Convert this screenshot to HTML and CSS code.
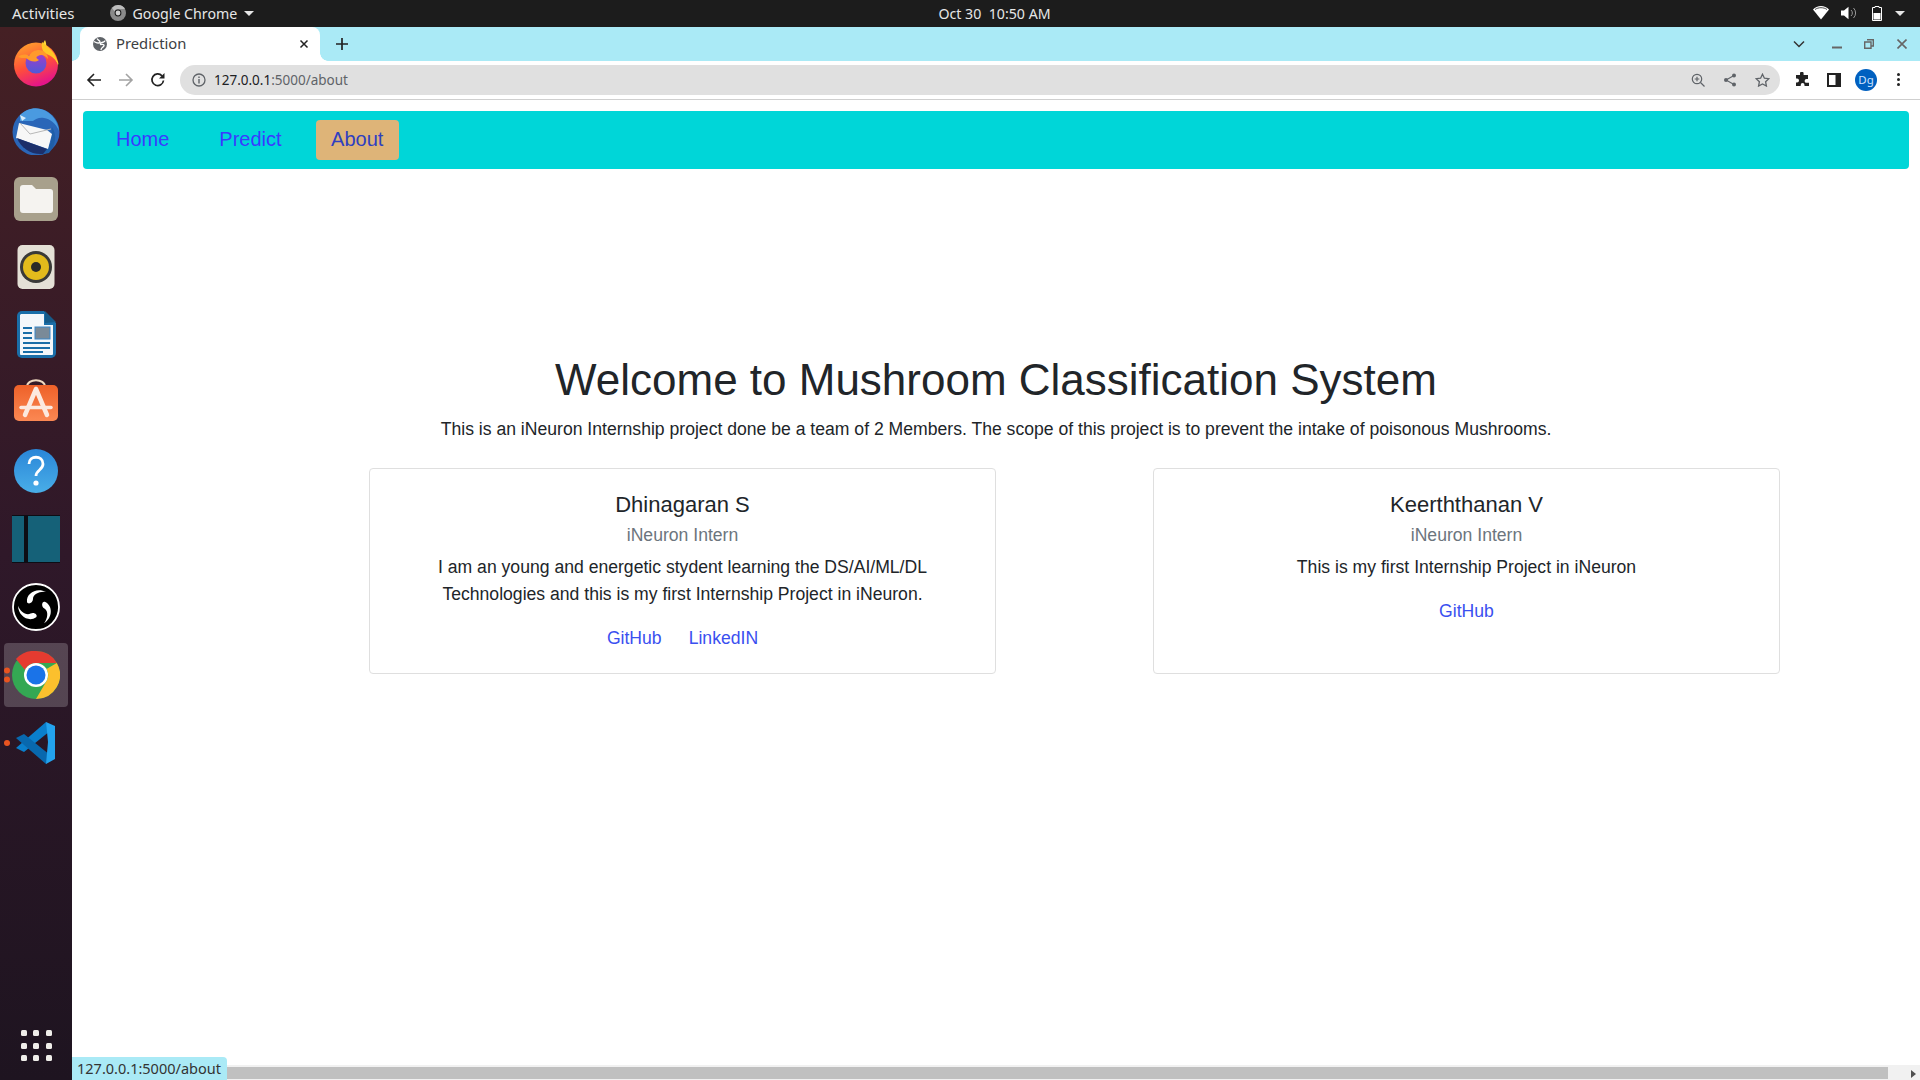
FILE: index.html
```html
<!DOCTYPE html>
<html lang="en">
<head>
<meta charset="utf-8">
<title>Prediction</title>
<link rel="stylesheet" href="styles.css">
</head>
<body>
<header class="topbar">
  <div class="top-left">
    <span class="activities">Activities</span>
    <span class="app-menu">
      <svg class="app-icon" viewBox="0 0 16 16"><circle cx="8" cy="8" r="8" fill="#8a8a8a"/><path d="M8 0a8 8 0 0 1 7 4H8a4 4 0 0 0-3.600 2.200L2 3a8 8 0 0 1 6-3z" fill="#bdbdbd"/><circle cx="8" cy="8" r="3.400" fill="#1c1c1c"/><circle cx="8" cy="8" r="2.400" fill="#d0d0d0"/></svg>
      <span>Google Chrome</span>
      <i class="caret"></i>
    </span>
  </div>
  <div class="clock">Oct 30&nbsp; 10:50 AM</div>
  <div class="tray">
    <svg width="16" height="14" viewBox="0 0 16 14"><path d="M0 3.500C2 1.300 5 0 8 0s6 1.300 8 3.500L8 13.500z" fill="#fff"/><path d="M2 3.500C3.700 2.300 5.800 1.700 8 1.700s4.300.6 6 1.800" fill="none" stroke="#1c1c1c" stroke-width=".8"/></svg>
    <svg width="16" height="14" viewBox="0 0 16 14"><path d="M0 4.500h3L7.500.8v12.400L3 9.500H0z" fill="#fff"/><path d="M10 4a4 4 0 0 1 0 6M12.500 2a7 7 0 0 1 0 10" fill="none" stroke="#999" stroke-width="1"/></svg>
    <svg class="battery" width="10" height="15" viewBox="0 0 10 15"><path d="M3 .5h4v1h2.500v13H.5v-13H3z" fill="none" stroke="#fff"/><rect x="1.500" y="7" width="7" height="6.500" fill="#fff"/></svg>
    <i class="caret caret-tray"></i>
  </div>
</header>

<div class="desktop">
  <nav class="dock">
    <div class="dock-list">
      <div class="dock-item">
        <svg viewBox="0 0 48 48" width="48" height="48"><defs><linearGradient id="ff" x1=".1" y1="0" x2=".5" y2="1"><stop offset="0" stop-color="#ffa92a"/><stop offset=".55" stop-color="#ff4f3a"/><stop offset="1" stop-color="#e4148a"/></linearGradient><linearGradient id="ffg" x1="0" y1="0" x2="0" y2="1"><stop offset="0" stop-color="#a83ac8"/><stop offset="1" stop-color="#4d5ad8"/></linearGradient></defs><circle cx="24" cy="25.500" r="22" fill="url(#ff)"/><path d="M33 1c2 4 1 7 1 10 4 2 8 5 12 12 .5 1 .5 2 0 3-2-6-6-11-13-14-3-3-3-7 0-11z" fill="#ffd83a"/><path d="M30 3c6 5 15 11 16 22-3-6-8-9-14-11-2-4-3-7-2-11z" fill="#ffc726"/><circle cx="24" cy="24" r="10.500" fill="url(#ffg)"/><path d="M6 18c4-3 8-3 11-1 2-4 6-6 10-6 5 0 9 4 9 9-3-4-7-5-10-3-3 1-1 3 1 4-4 3-10 1-13-2-3 0-6 0-8-1z" fill="#ff9a2b"/></svg>
      </div>
      <div class="dock-item">
        <svg viewBox="0 0 48 48" width="48" height="48"><circle cx="24" cy="25" r="23.500" fill="#2a66b8"/><path d="M8 8c7-7 17-9 26-4 7 4 12 11 13 20-3-8-9-12-15-13-5-1-8 1-11 3L8 14z" fill="#4a9ae0"/><path d="M40 20c5 8 4 18-3 26l-10 2 6-6 4-2-2-2 4-2z" fill="#1f5ea8"/><path d="M7 16l28 7 5 4-4 15L4 31z" fill="#f7f7f7"/><path d="M8 16l10 11 21-5" fill="none" stroke="#b8b8b8" stroke-width="1"/><path d="M5 31l30 11-4 5C19 48 9 41 5 31z" fill="#1c2f6a"/><path d="M8 8l2 6 4-3z" fill="#d7ecfa"/></svg>
      </div>
      <div class="dock-item">
        <svg viewBox="0 0 48 48" width="48" height="48"><rect x="2" y="2" width="44" height="44" rx="6" fill="#a8a08c"/><path d="M8 13a3 3 0 0 1 3-3h9l4 4h14a3 3 0 0 1 3 3v18a3 3 0 0 1-3 3H11a3 3 0 0 1-3-3z" fill="#f5f3f0"/></svg>
      </div>
      <div class="dock-item">
        <svg viewBox="0 0 48 48" width="48" height="48"><rect x="5.500" y="2" width="37" height="44" rx="5" fill="#e4e0d6"/><circle cx="24" cy="24" r="16" fill="#3a3a38"/><circle cx="24" cy="24" r="13" fill="#e3bb1c"/><circle cx="24" cy="24" r="5" fill="#2a2a28"/></svg>
      </div>
      <div class="dock-item">
        <svg viewBox="0 0 48 48" width="48" height="48"><path d="M10 0h22l12 12v30a5 5 0 0 1-5 5H10a5 5 0 0 1-5-5V5a5 5 0 0 1 5-5z" fill="#1a6ea8"/><path d="M9 3h23v11h9v29a1 1 0 0 1-1 1H9a1 1 0 0 1-1-1V4z" fill="#f4f7fa"/><path d="M33 0l11 11-11 1z" fill="#165a88"/><rect x="23" y="16" width="15" height="12" fill="#7a8a98" stroke="#3a88c8"/><path d="M11 17h9M11 22h9M11 27h9M11 32h27M11 37h27M11 41h20" stroke="#1a6ea8" stroke-width="2.200"/></svg>
      </div>
      <div class="dock-item">
        <svg viewBox="0 0 48 48" width="48" height="48"><defs><linearGradient id="sw" x1="0" y1="0" x2="0" y2="1"><stop offset="0" stop-color="#ee6129"/><stop offset="1" stop-color="#fb8853"/></linearGradient></defs><path d="M15 8c0-9 18-9 18 0" fill="none" stroke="#efd9c0" stroke-width="2"/><rect x="2" y="6" width="44" height="36" rx="5" fill="url(#sw)"/><path d="M24 10L13 36M24 10l11 26" stroke="#fce9df" stroke-width="4.500" stroke-linecap="round"/><path d="M9 28.500h30" stroke="#fce9df" stroke-width="3.500" stroke-linecap="round"/></svg>
      </div>
      <div class="dock-item">
        <svg viewBox="0 0 48 48" width="48" height="48"><defs><linearGradient id="hp" x1="0" y1="0" x2="0" y2="1"><stop offset="0" stop-color="#2a86d8"/><stop offset="1" stop-color="#49aee8"/></linearGradient></defs><circle cx="24" cy="24" r="22" fill="url(#hp)"/><path d="M17 17c0-9 14-9 14 0 0 6-7 6-7 12" fill="none" stroke="#fff" stroke-width="2.800"/><circle cx="24" cy="36" r="2.600" fill="#fff"/></svg>
      </div>
      <div class="dock-item">
        <svg viewBox="0 0 48 48" width="48" height="48"><rect width="48" height="48" fill="#0d0d14"/><rect x="0" y="1" width="12" height="46" fill="#156178"/><rect x="16" y="1" width="32" height="46" fill="#156178"/></svg>
      </div>
      <div class="dock-item">
        <svg viewBox="0 0 48 48" width="48" height="48"><circle cx="24" cy="24" r="23" fill="#000" stroke="#fff" stroke-width="1.800"/><g fill="#fff"><path d="M15 19C14 10 25 4 34 9 28 8 21 11 21 16 21 20 16 22 15 19z"/><path d="M15 19C14 10 25 4 34 9 28 8 21 11 21 16 21 20 16 22 15 19z" transform="rotate(120 24 24)"/><path d="M15 19C14 10 25 4 34 9 28 8 21 11 21 16 21 20 16 22 15 19z" transform="rotate(240 24 24)"/></g></svg>
      </div>
      <div class="dock-item dock-active">
        <span class="pips"><i></i><i></i></span>
        <svg viewBox="0 0 48 48" width="48" height="48"><circle cx="24" cy="24" r="24" fill="#34a853"/><path d="M24 0a24 24 0 0 1 20.800 12H24a12 12 0 0 0-11 7L4 8A24 24 0 0 1 24 0z" fill="#e53b30"/><path d="M44.800 12A24 24 0 0 1 24 48l10.500-18A12 12 0 0 0 34.500 18z" fill="#fbc02d"/><circle cx="24" cy="24" r="12" fill="#fff"/><circle cx="24" cy="24" r="9.500" fill="#1a73e8"/></svg>
      </div>
      <div class="dock-item">
        <span class="pips"><i></i></span>
        <svg viewBox="0 0 48 48" width="48" height="48"><path d="M34 3L38 12 12 33 4 29z" fill="#0a7fcc"/><path d="M4 19l8-4 26 21-4 9z" fill="#0868ae"/><path d="M34 3l9 4v33l-9 5 2-22z" fill="#23a3ee"/></svg>
      </div>
    </div>
    <div class="grid-btn"><i></i><i></i><i></i><i></i><i></i><i></i><i></i><i></i><i></i></div>
  </nav>

  <main class="window">
    <div class="tabstrip">
      <div class="tab">
        <svg class="favicon" width="14" height="14" viewBox="0 0 14 14"><circle cx="7" cy="7" r="7" fill="#5f6368"/><path d="M4 1.500c1 2 3 2 3 3.500S4 6 3 5.500L1 4.500M8 13c0-2 1-2 2.500-3.500S10 7 8.500 7.500 7 6 9 5.500s3-1 3-2" fill="none" stroke="#fff" stroke-width="1.300"/></svg>
        <span class="tab-title">Prediction</span>
        <svg class="tab-close" width="10" height="10" viewBox="0 0 10 10"><path d="M1.500 1.500l7 7M8.500 1.500l-7 7" stroke="#222" stroke-width="1.500"/></svg>
      </div>
      <svg class="new-tab" width="12" height="12" viewBox="0 0 12 12"><path d="M6 0v12M0 6h12" stroke="#222" stroke-width="1.700"/></svg>
      <div class="win-controls">
        <svg class="chev" width="12" height="8" viewBox="0 0 12 8"><path d="M1 1.500l5 5 5-5" fill="none" stroke="#333" stroke-width="1.500"/></svg>
        <svg class="win-min" width="10" height="10" viewBox="0 0 10 10"><path d="M0 8.500h10" stroke="#666" stroke-width="2"/></svg>
        <svg class="win-max" width="10" height="10" viewBox="0 0 10 10"><path d="M3 .7h6.300V7H7M.7 3H7v6.300H.7z" fill="none" stroke="#666" stroke-width="1.400"/></svg>
        <svg class="win-close" width="10" height="10" viewBox="0 0 10 10"><path d="M.5.500l9 9M9.500.500l-9 9" stroke="#666" stroke-width="1.600"/></svg>
      </div>
    </div>

    <div class="toolbar">
      <svg width="16" height="16" viewBox="0 0 16 16"><path d="M15 8H2M8 2L2 8l6 6" fill="none" stroke="#222" stroke-width="1.600"/></svg>
      <svg width="16" height="16" viewBox="0 0 16 16"><path d="M1 8h13M8 2l6 6-6 6" fill="none" stroke="#a3a3a3" stroke-width="1.600"/></svg>
      <svg width="16" height="16" viewBox="0 0 16 16"><path d="M13.500 8.500A5.800 5.800 0 1 1 12 3.800" fill="none" stroke="#222" stroke-width="1.700"/><path d="M14.500 1v5.500H9z" fill="#222"/></svg>
      <div class="omnibox">
        <svg width="14" height="14" viewBox="0 0 14 14"><circle cx="7" cy="7" r="6" fill="none" stroke="#5f6368" stroke-width="1.300"/><path d="M7 6v4.500M7 3.500v1.400" stroke="#5f6368" stroke-width="1.400"/></svg>
        <span class="url"><b>127.0.0.1</b>:5000/about</span>
        <div class="omni-icons">
          <svg width="14" height="14" viewBox="0 0 14 14"><circle cx="6" cy="6" r="4.700" fill="none" stroke="#5f6368" stroke-width="1.200"/><path d="M9.500 9.500L13.500 13.500M6 3.700v4.600M3.700 6h4.600" stroke="#5f6368" stroke-width="1.200"/></svg>
          <svg width="14" height="14" viewBox="0 0 14 14"><path d="M11 2.500L3 7l8 4.500" fill="none" stroke="#5f6368" stroke-width="1.100"/><circle cx="11" cy="2.500" r="2" fill="#5f6368"/><circle cx="3" cy="7" r="2" fill="#5f6368"/><circle cx="11" cy="11.500" r="2" fill="#5f6368"/></svg>
          <svg width="15" height="14" viewBox="0 0 15 14"><path d="M7.500 1.200l1.900 4 4.400.5-3.200 3 .8 4.300-3.900-2.100L3.600 13l.8-4.300-3.200-3 4.400-.5z" fill="none" stroke="#5f6368" stroke-width="1.300"/></svg>
        </div>
      </div>
      <div class="tool-right">
        <span class="tool-slot"><svg width="15" height="15" viewBox="0 0 15 15"><path d="M5 1.500a1.800 1.800 0 0 1 3.600 0V3H13v4h-1.500a1.900 1.900 0 0 0 0 3.800H14V14H9.500v-1a1.900 1.900 0 0 0-3.800 0v1H1v-3.500h1a2 2 0 0 0 0-4H1V3h4z" fill="#222"/></svg></span>
        <span class="tool-slot"><svg width="14" height="14" viewBox="0 0 14 14"><rect x="1" y="1" width="12" height="12" fill="#fff" stroke="#222" stroke-width="2"/><rect x="8.500" y="1" width="4.500" height="12" fill="#222"/></svg></span>
        <span class="tool-slot"><span class="avatar">Dg</span></span>
        <span class="tool-slot"><span class="kebab"><i></i><i></i><i></i></span></span>
      </div>
    </div>

    <div class="page">
      <div class="navbar">
        <a class="nav-link">Home</a>
        <a class="nav-link">Predict</a>
        <a class="nav-link nav-active">About</a>
      </div>

      <section class="intro">
        <h1>Welcome to Mushroom Classification System</h1>
        <p>This is an iNeuron Internship project done be a team of 2 Members. The scope of this project is to prevent the intake of poisonous Mushrooms.</p>
      </section>

      <section class="cards">
        <article class="card">
          <h5>Dhinagaran S</h5>
          <h6>iNeuron Intern</h6>
          <p>I am an young and energetic stydent learning the DS/AI/ML/DL Technologies and this is my first Internship Project in iNeuron.</p>
          <div class="card-links"><a>GitHub</a><a>LinkedIN</a></div>
        </article>
        <article class="card">
          <h5>Keerththanan V</h5>
          <h6>iNeuron Intern</h6>
          <p>This is my first Internship Project in iNeuron</p>
          <div class="card-links"><a>GitHub</a></div>
        </article>
      </section>
    </div>

    <div class="scrollbar">
      <div class="thumb"></div>
      <i class="arrow-right"></i>
    </div>
    <div class="status">127.0.0.1:5000/about</div>
  </main>
</div>
</body>
</html>
```

FILE: styles.css
```css
* { box-sizing: border-box; }
html, body { margin: 0; height: 100%; overflow: hidden; }
body {
  width: 1920px;
  height: 1080px;
  display: flex;
  flex-direction: column;
  font-family: "Liberation Sans", Arial, sans-serif;
  background: #fff;
}

/* GNOME top bar */
.topbar {
  height: 27px;
  flex: none;
  background: #1c1c1c;
  color: #e6e6e6;
  font-family: "Noto Sans", sans-serif;
  font-size: 14.200px;
  display: grid;
  grid-template-columns: 1fr auto 1fr;
  align-items: center;
  padding: 0 15px 1px 12px;
}
.top-left { display: flex; align-items: center; gap: 35px; }
.activities { font-size: 15px; }
.app-menu { display: flex; align-items: center; gap: 7px; }
.app-icon { width: 16px; height: 16px; }
.caret {
  display: inline-block;
  width: 0; height: 0;
  border-left: 5px solid transparent;
  border-right: 5px solid transparent;
  border-top: 5px solid #e6e6e6;
}
.clock { padding-left: 72px; }
.tray { display: flex; justify-content: flex-end; align-items: center; gap: 12px; }
.battery { margin-left: 3px; }
.caret-tray { margin-left: 1px; }

/* Dock */
.desktop { flex: 1; display: flex; min-height: 0; }
.dock {
  width: 72px;
  flex: none;
  background: linear-gradient(180deg, #452024 0%, #2f1829 50%, #1e1420 100%);
  display: flex;
  flex-direction: column;
  justify-content: space-between;
  padding: 4px 0 19px;
}
.dock-list { display: flex; flex-direction: column; gap: 4px; }
.dock-item {
  position: relative;
  width: 64px;
  height: 64px;
  margin: 0 4px;
  display: flex;
  align-items: center;
  justify-content: center;
  border-radius: 4px;
}
.dock-active { background: rgba(255, 255, 255, .2); }
.pips {
  position: absolute;
  left: 0;
  top: 50%;
  transform: translateY(-50%);
  display: flex;
  flex-direction: column;
  gap: 3px;
}
.pips i { width: 6px; height: 6px; border-radius: 50%; background: #e95420; }
.grid-btn {
  width: 31px;
  margin: 0 auto;
  display: grid;
  grid-template-columns: repeat(3, 6px);
  justify-content: space-between;
  row-gap: 6.500px;
}
.grid-btn i { width: 6px; height: 6px; border-radius: 1.500px; background: #f0eeea; }

/* Chrome */
.window { position: relative; flex: 1; min-width: 0; display: flex; flex-direction: column; background: #fff; }
.tabstrip {
  height: 34px;
  flex: none;
  background: #aaeaf6;
  display: flex;
  align-items: flex-start;
  padding-left: 8px;
}
.tab {
  position: relative;
  width: 240px;
  height: 34px;
  background: #fff;
  border-radius: 8px 8px 0 0;
  display: flex;
  align-items: center;
  padding: 0 11px 0 13px;
  gap: 9px;
}
.tab::before, .tab::after {
  content: "";
  position: absolute;
  bottom: 0;
  width: 8px;
  height: 8px;
}
.tab::before { left: -8px; background: radial-gradient(circle at 0 0, transparent 7.500px, #fff 8px); }
.tab::after { right: -8px; background: radial-gradient(circle at 100% 0, transparent 7.500px, #fff 8px); }
.tab-title { flex: 1; font-family: "Noto Sans", sans-serif; font-size: 14.800px; line-height: 20px; margin-top: -2px; color: #3c4043; }
.new-tab { margin: 11px 0 0 16px; }
.win-controls { margin-left: auto; height: 34px; display: flex; align-items: center; padding-right: 13px; }
.chev { margin-right: 27px; }
.win-min { margin-right: 22px; }
.win-max { margin-right: 23px; }

.toolbar {
  height: 39px;
  flex: none;
  background: #fff;
  border-bottom: 1px solid #cfcfcf;
  display: flex;
  align-items: center;
  padding: 0 6px 1px 14px;
  gap: 16px;
}
.omnibox {
  flex: 1;
  height: 30px;
  margin-left: -2px;
  background: #e0e0e0;
  border-radius: 15px;
  display: flex;
  align-items: center;
  padding: 0 10px 0 12px;
  gap: 8px;
}
.url { flex: 1; font-family: "Noto Sans", sans-serif; font-size: 13.500px; color: #5f6368; }
.url b { font-weight: 400; color: #202124; }
.omni-icons { display: flex; align-items: center; gap: 18px; }
.tool-right { display: flex; align-items: center; margin-left: -10px; }
.tool-slot { width: 32px; display: flex; align-items: center; justify-content: center; }
.avatar {
  width: 22px; height: 22px;
  border-radius: 50%;
  background: #0060c0;
  color: #cfe3ff;
  font-family: "Noto Sans", sans-serif;
  font-size: 11.500px;
  display: flex; align-items: center; justify-content: center;
}
.kebab { display: flex; flex-direction: column; gap: 2px; width: 14px; align-items: center; }
.kebab i { width: 3px; height: 3px; border-radius: 50%; background: #222; }

/* Page */
.page { flex: 1; min-height: 0; padding: 11px 11px 0; color: #212529; }
.navbar {
  height: 58px;
  background: #00d6d8;
  border-radius: 4px;
  display: flex;
  align-items: center;
  gap: 18px;
  padding: 0 17px;
}
.nav-link {
  height: 40px;
  line-height: 38px;
  padding: 0 16px;
  border-radius: 4px;
  font-size: 20px;
  color: #3a3aff;
}
.nav-active { padding: 0 15.500px; background: #deb478; color: #2f3fc0; }
.intro { text-align: center; padding-top: 184px; }
.intro h1 { margin: 0; font-size: 44px; font-weight: 400; line-height: 53px; }
.intro p { margin: 10px 0 0; font-size: 17.600px; line-height: 26px; color: #212529; }
.cards {
  display: flex;
  gap: 157px;
  margin: 26px 0 0 286px;
}
.card {
  width: 627px;
  height: 206px;
  border: 1px solid #dfdfdf;
  border-radius: 4px;
  padding: 21px 52px;
  text-align: center;
}
.card h5 { margin: 0; font-size: 22px; font-weight: 400; line-height: 30px; }
.card h6 { margin: 2px 0 0; font-size: 17.600px; font-weight: 400; line-height: 26px; color: #6c757d; }
.card p { margin: 6px 0 0; font-size: 17.600px; line-height: 27px; }
.card-links { margin-top: 17px; display: flex; justify-content: center; gap: 27px; font-size: 17.600px; line-height: 26px; color: #3a50f0; }

/* Scrollbar & status */
.scrollbar {
  position: absolute;
  left: 0; right: 0; bottom: 0;
  height: 15px;
  background: #f1f1f1;
}
.thumb { position: absolute; left: 0; top: 2px; bottom: 1px; width: 1816px; background: #c0c0c0; }
.arrow-right {
  position: absolute;
  right: 4px; top: 5px;
  width: 0; height: 0;
  border-top: 4px solid transparent;
  border-bottom: 4px solid transparent;
  border-left: 5px solid #505050;
}
.status {
  position: absolute;
  left: 0; bottom: 0;
  height: 23px;
  padding: 0 6px 0 5px;
  background: #aaeaf6;
  border-radius: 0 4px 0 0;
  font-family: "Noto Sans", sans-serif;
  font-size: 14.500px;
  line-height: 23px;
  color: #333;
}
```
